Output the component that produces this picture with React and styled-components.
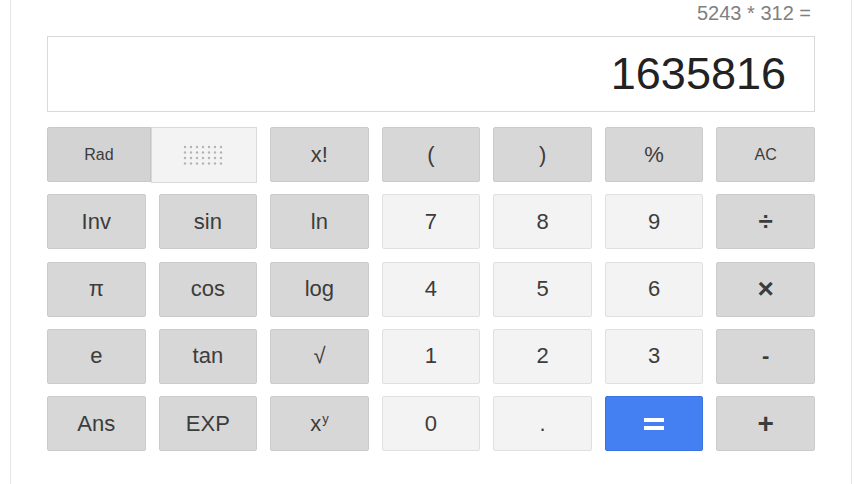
import React from "react";
import styled, { createGlobalStyle } from "styled-components";

const Global = createGlobalStyle`
  html, body { margin: 0; padding: 0; background: #fff; }
  body { font-family: "Liberation Sans", Arial, sans-serif; }
`;

const Page = styled.div`
  width: 860px;
  height: 484px;
  overflow: hidden;
  background: #fff;
  padding: 0 8px 0 10px;
  box-sizing: border-box;
`;

const Card = styled.div`
  height: 100%;
  box-sizing: border-box;
  border-left: 1px solid #e6e6e6;
  border-right: 1px solid #e6e6e6;
  padding: 0 36px;
  display: flex;
  flex-direction: column;
`;

const Expression = styled.div`
  height: 28px;
  padding-top: 2px;
  padding-right: 4px;
  box-sizing: border-box;
  text-align: right;
  font-size: 20px;
  color: #808080;
  line-height: 22px;
  margin-bottom: 8px;
`;

const Display = styled.div`
  height: 76px;
  box-sizing: border-box;
  border: 1px solid #d9d9d9;
  background: #fff;
  display: flex;
  align-items: center;
  justify-content: flex-end;
  padding-right: 28px;
  font-size: 45px;
  color: #222;
`;

const Grid = styled.div`
  margin-top: 15px;
  display: grid;
  grid-template-columns: repeat(7, 1fr);
  grid-auto-rows: 55px;
  column-gap: 13px;
  row-gap: 12.3px;
`;

const Key = styled.div`
  box-sizing: border-box;
  display: flex;
  align-items: center;
  justify-content: center;
  border-radius: 2px;
  font-size: ${(p) => p.$size || 22}px;
  font-weight: ${(p) => (p.$bold ? 700 : 400)};
  color: ${(p) => (p.$kind === "eq" ? "#fff" : "#3c3c3c")};
  background: ${(p) =>
    p.$kind === "eq" ? "#4580f3" : p.$kind === "num" ? "#f3f3f3" : "#d7d7d7"};
  border: 1px solid
    ${(p) =>
      p.$kind === "eq" ? "#3b73e0" : p.$kind === "num" ? "#e0e0e0" : "#cbcbcb"};
`;

const Toggle = styled.div`
  grid-column: span 2;
  display: flex;
  box-sizing: border-box;
  border: 1px solid #c9c9c9;
  border-radius: 2px;
  background: #d3d3d3;
`;

const ToggleLabel = styled.div`
  width: 102px;
  display: flex;
  align-items: center;
  justify-content: center;
  font-size: 16px;
  color: #3c3c3c;
  border-right: 1px solid #c4c4c4;
`;

const ToggleKnob = styled.div`
  flex: 1;
  display: flex;
  align-items: center;
  justify-content: center;
  background: #f3f3f3;
  margin: -1px -1px -2px 0;
  border: 1px solid #dadada;
`;

const Sup = styled.sup`
  font-size: 13px;
  vertical-align: 8px;
  margin-left: 1px;
`;

const Dots = () => {
  const dots = [];
  for (let r = 0; r < 4; r++)
    for (let c = 0; c < 7; c++)
      dots.push(<circle key={r + "-" + c} cx={2 + c * 6} cy={2 + r * 5.5} r="1.2" fill="#b4b4b4" />);
  return (
    <svg width="42" height="20" viewBox="0 0 42 20">
      {dots}
    </svg>
  );
};

const EqualsIcon = () => (
  <svg width="20" height="14" viewBox="0 0 20 14">
    <rect x="0" y="1" width="20" height="4" fill="#fff" />
    <rect x="0" y="9" width="20" height="4" fill="#fff" />
  </svg>
);

const rows = [
  [
    { t: "x!" },
    { t: "(" },
    { t: ")" },
    { t: "%" },
    { t: "AC", size: 16 },
  ],
  [
    { t: "Inv" },
    { t: "sin" },
    { t: "ln" },
    { t: "7", kind: "num" },
    { t: "8", kind: "num" },
    { t: "9", kind: "num" },
    { t: "÷", bold: true, size: 26 },
  ],
  [
    { t: "π" },
    { t: "cos" },
    { t: "log" },
    { t: "4", kind: "num" },
    { t: "5", kind: "num" },
    { t: "6", kind: "num" },
    { t: "×", bold: true, size: 28 },
  ],
  [
    { t: "e" },
    { t: "tan" },
    { t: "√" },
    { t: "1", kind: "num" },
    { t: "2", kind: "num" },
    { t: "3", kind: "num" },
    { t: "-", bold: true },
  ],
  [
    { t: "Ans" },
    { t: "EXP" },
    { t: "xy" },
    { t: "0", kind: "num" },
    { t: ".", kind: "num" },
    { t: "=", kind: "eq" },
    { t: "+", bold: true, size: 28 },
  ],
];

export default function App() {
  return (
    <Page>
      <Global />
      <Card>
        <Expression>5243 * 312 =</Expression>
        <Display>1635816</Display>
        <Grid>
          <Toggle>
            <ToggleLabel>Rad</ToggleLabel>
            <ToggleKnob>
              <Dots />
            </ToggleKnob>
          </Toggle>
          {rows.flat().map((k, i) => (
            <Key key={i} $kind={k.kind} $bold={k.bold} $size={k.size}>
              {k.t === "xy" ? (
                <span>
                  x<Sup>y</Sup>
                </span>
              ) : k.t === "=" ? (
                <EqualsIcon />
              ) : (
                k.t
              )}
            </Key>
          ))}
        </Grid>
      </Card>
    </Page>
  );
}
